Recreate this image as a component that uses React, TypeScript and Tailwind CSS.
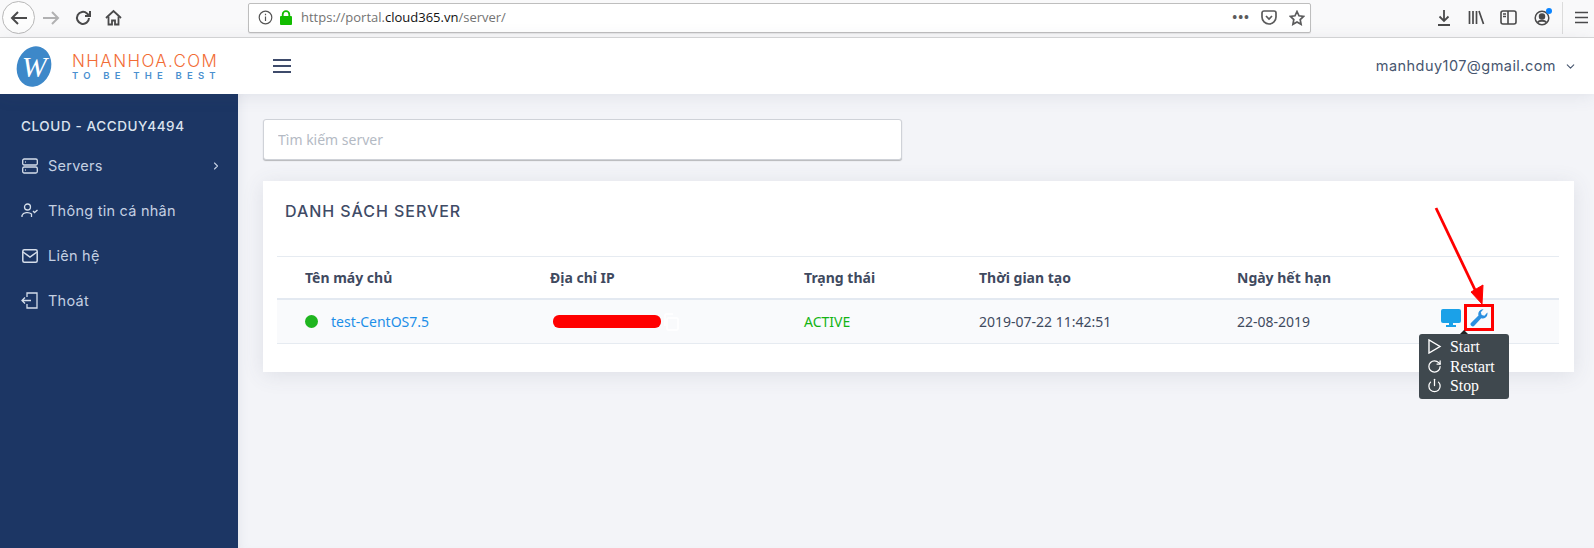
import { ChevronDown, ChevronRight, Power, RotateCw } from 'lucide-react';

const columns = [
  { label: 'Tên máy chủ', width: 'w-[245px]' },
  { label: 'Địa chỉ IP', width: 'w-[254px]' },
  { label: 'Trạng thái', width: 'w-[175px]' },
  { label: 'Thời gian tạo', width: 'w-[258px]' },
  { label: 'Ngày hết hạn', width: 'w-[200px]' },
];

function BrowserBar() {
  return (
    <div className="flex h-[38px] items-center border-b border-[#d8d8d8] bg-[#f9f9fa] pb-[2px] text-[#4c4c4d]">
      <div className="ml-[2px] flex h-[33px] w-[33px] items-center justify-center rounded-full border border-[#b8b8b8] bg-[#fdfdfd]">
        <svg width="18" height="16" viewBox="0 0 18 16" fill="none" stroke="#4a4a4b" strokeWidth="2"><path d="M17 8H2M8 2 2 8l6 6" /></svg>
      </div>
      <svg className="ml-[7px]" width="18" height="16" viewBox="0 0 18 16" fill="none" stroke="#b1b1b2" strokeWidth="2"><path d="M1 8h15M10 2l6 6-6 6" /></svg>
      <svg className="ml-[14px]" width="18" height="18" viewBox="0 0 18 18" fill="none" stroke="#4a4a4b" strokeWidth="2"><path d="M15 9a6 6 0 1 1-2-4.600L16 7" /><path d="M16 2v5h-5" /></svg>
      <svg className="ml-[13px]" width="17" height="17" viewBox="0 0 17 17" fill="none" stroke="#4a4a4b" strokeWidth="1.800"><path d="M1 9 8.500 2 16 9" /><path d="M3.500 7.500V15.500H7V11.500h3v4h3.500V7.500" /></svg>
      <div className="ml-[126px] flex h-[30px] w-[1063px] items-center rounded-[2px] border border-[#bebebe] bg-white pl-[9px] pr-[5px] shadow-[0_1px_1px_rgba(0,0,0,0.08)]">
        <svg width="15" height="15" viewBox="0 0 15 15" fill="none" stroke="#555" strokeWidth="1.200"><circle cx="7.500" cy="7.500" r="6.300" /><path d="M7.500 6.500v4.500M7.500 3.800v1.400" /></svg>
        <svg className="ml-[6px]" width="14" height="15" viewBox="0 0 14 15"><rect x="1" y="6" width="12" height="9" rx="1" fill="#12bc00" /><path d="M3.700 6.500V4.500a3.300 3.300 0 0 1 6.600 0v2" fill="none" stroke="#12bc00" strokeWidth="1.800" /></svg>
        <span className="ml-[8px] font-['Open_Sans',sans-serif] text-[13px] text-[#737373]">
          https://portal.<span className="text-[#111]">cloud365.vn</span>/server/
        </span>
        <span className="ml-auto text-[13px] font-bold leading-none tracking-[1px] text-[#5b5b5c]">•••</span>
        <svg className="ml-[11px]" width="16" height="15" viewBox="0 0 16 15" fill="none" stroke="#5b5b5c" strokeWidth="1.700"><path d="M1 3a2 2 0 0 1 2-2h10a2 2 0 0 1 2 2v4a7 7 0 0 1-14 0z" /><path d="m5 6 3 3 3-3" /></svg>
        <svg className="ml-[12px]" width="16" height="16" viewBox="0 0 16 16" fill="none" stroke="#5b5b5c" strokeWidth="1.700"><path d="m8 1.500 2 4.300 4.600.6-3.400 3.200.9 4.700L8 12l-4.100 2.300.9-4.700L1.400 6.400l4.600-.6z" /></svg>
      </div>
      <svg className="ml-[126px]" width="14" height="16" viewBox="0 0 14 16" fill="none" stroke="#4a4a4b" strokeWidth="1.800"><path d="M7 0v11M2.500 6.500 7 11l4.500-4.500M1 15h12" /></svg>
      <svg className="ml-[17px]" width="17" height="15" viewBox="0 0 17 15" fill="none" stroke="#4a4a4b" strokeWidth="1.700"><path d="M1.500 1v13M5 1v13M8.500 1v13M11 1l4.500 13" /></svg>
      <svg className="ml-[15px]" width="17" height="15" viewBox="0 0 17 15" fill="none" stroke="#4a4a4b" strokeWidth="1.600"><rect x="1" y="1" width="15" height="13" rx="2" /><path d="M8 1v13" /><path d="M3 4h3M3 6.500h3" /></svg>
      <div className="relative ml-[17px] h-[16px] w-[16px]">
        <svg width="16" height="16" viewBox="0 0 16 16" fill="none" stroke="#4a4a4b" strokeWidth="1.500"><circle cx="8" cy="8" r="6.800" /><circle cx="8" cy="6.500" r="2.500" fill="#4a4a4b" /><path d="M3.500 12.500c2-2.500 7-2.500 9 0" strokeWidth="2" /></svg>
        <span className="absolute right-[-2px] top-[-2px] h-[6px] w-[6px] rounded-full bg-[#0a84ff]" />
      </div>
      <div className="ml-[12px] h-[32px] w-px bg-[#dcdcdc]" />
      <svg className="ml-[12px]" width="13" height="13" viewBox="0 0 13 13" stroke="#4a4a4b" strokeWidth="1.700"><path d="M0 1.500h13M0 6.500h13M0 11.500h13" /></svg>
    </div>
  );
}

function AppHeader() {
  return (
    <header className="relative z-10 flex h-[56px] items-center bg-white shadow-[0_2px_18px_rgba(70,80,110,0.1)]">
      <div className="ml-[17px] flex h-[41px] w-[34px] rotate-[18deg] items-center justify-center rounded-[50%] bg-[#3d88c9]">
        <span className="-rotate-[18deg] font-['Liberation_Serif',serif] text-[30px] italic leading-none text-white">W</span>
      </div>
      <div className="ml-[21px] w-[147px]">
        <div className="whitespace-nowrap font-['Inter',sans-serif] text-[17px] font-light leading-[18px] tracking-[1.400px] text-[#f26c35]">NHANHOA.COM</div>
        <div className="mt-[1px] whitespace-nowrap font-['Inter',sans-serif] text-[9.500px] font-semibold leading-[10px] tracking-[5.200px] text-[#4a90cf]">TO BE THE BEST</div>
      </div>
      <div className="ml-[54px] flex w-[18px] flex-col gap-[4px]">
        <span className="h-[2px] bg-[#3e4b6b]" />
        <span className="h-[2px] bg-[#3e4b6b]" />
        <span className="h-[2px] bg-[#3e4b6b]" />
      </div>
      <div className="ml-auto mr-[17px] flex items-center gap-[8px] font-['Inter',sans-serif] text-[14.500px] tracking-[0.45px] text-[#47566f]">
        manhduy107@gmail.com
        <ChevronDown size={13} strokeWidth={2} />
      </div>
    </header>
  );
}

function Sidebar() {
  return (
    <aside className="w-[238px] shrink-0 bg-[#1c3664] pl-[21px] pr-[16px] pt-[22px] font-['Inter',sans-serif] text-[#c4d0e2]">
      <div className="text-[13.500px] font-medium leading-[20px] tracking-[0.6px] text-[#dbe3ee]">CLOUD - ACCDUY4494</div>
      <nav className="mt-[7px] flex flex-col text-[14.500px] tracking-[0.25px]">
        <a className="flex h-[45px] items-center gap-[10px]">
          <span className="flex w-[17px] justify-center">
            <svg width="16" height="16" viewBox="0 0 16 16" fill="none" stroke="#d5deea" strokeWidth="1.300"><rect x="0.700" y="1" width="14.600" height="6" rx="1.500" /><rect x="0.700" y="9" width="14.600" height="6" rx="1.500" /><path d="M3 4h.8M3 12h.8" /></svg>
          </span>
          Servers
          <ChevronRight className="ml-auto" size={12} strokeWidth={2.200} />
        </a>
        <a className="flex h-[45px] items-center gap-[10px]">
          <span className="flex w-[17px] justify-center">
            <svg width="17" height="15" viewBox="0 0 17 15" fill="none" stroke="#d5deea" strokeWidth="1.300"><circle cx="6.500" cy="4" r="3" /><path d="M1 14v-1.500a5.500 4 0 0 1 9.500-1.500V14" /><path d="m12 8 1.500 1.500L16.500 7" /></svg>
          </span>
          Thông tin cá nhân
        </a>
        <a className="flex h-[45px] items-center gap-[10px]">
          <span className="flex w-[17px] justify-center">
            <svg width="16" height="14" viewBox="0 0 16 14" fill="none" stroke="#d5deea" strokeWidth="1.500"><rect x="0.800" y="0.800" width="14.400" height="12.400" rx="1.500" /><path d="m1 3 7 5 7-5" /></svg>
          </span>
          Liên hệ
        </a>
        <a className="flex h-[45px] items-center gap-[10px]">
          <span className="flex w-[17px] justify-center">
            <svg width="17" height="17" viewBox="0 0 17 17" fill="none" stroke="#d5deea" strokeWidth="1.300"><path d="M6 5V1h10v15H6v-4" /><path d="M10 8.500H1M4 5.500l-3 3 3 3" /></svg>
          </span>
          Thoát
        </a>
      </nav>
    </aside>
  );
}

function ActionMenu() {
  return (
    <div className="absolute left-[-22px] top-[30px] z-20 h-[65px] w-[90px] rounded-[3px] bg-[#3f484e] py-[3px] pl-[8px] font-['Liberation_Serif',serif] text-[15.800px] leading-[19.500px] text-white">
      <span className="absolute left-[41px] top-[-4px] h-0 w-0 border-x-[4px] border-b-[4px] border-x-transparent border-b-[#222]" />
      <div className="flex items-center gap-[8px]">
        <svg width="15" height="15" viewBox="0 0 15 15" fill="none" stroke="#fff" strokeWidth="1.400"><path d="M2 1v13l11-6.500z" /></svg>
        Start
      </div>
      <div className="flex items-center gap-[8px]"><RotateCw size={15} strokeWidth={2} />Restart</div>
      <div className="flex items-center gap-[8px]"><Power size={15} strokeWidth={2} />Stop</div>
    </div>
  );
}

function ServerTable() {
  return (
    <div className="ml-[14px] mr-[15px] mt-[34px] font-['Noto_Sans',sans-serif]">
      <div className="flex h-[43px] items-center border-y border-t-[#e6ebf1] border-b-[#e3e9f1] pl-[28px] text-[14px] font-bold text-[#3f4a5f]">
        {columns.map((col) => (
          <div key={col.label} className={col.width}>{col.label}</div>
        ))}
      </div>
      <div className="flex h-[45px] items-center border-y border-t-[#e3e9f1] border-b-[#e6ebf1] bg-[#f9fafc] pl-[28px] text-[14px] text-[#3f4a5f]">
        <div className="flex w-[245px] items-center gap-[13px]">
          <span className="h-[13px] w-[13px] rounded-full bg-[#1fb51f]" />
          <span className="text-[#1d8fe8]">test-CentOS7.5</span>
        </div>
        <div className="flex w-[254px] items-center pl-[3px]">
          <div className="h-[13px] w-[108px] rounded-[6px] bg-[#ff0000]" />
          <svg className="ml-[2px]" width="16" height="18" viewBox="0 0 16 18" fill="none" stroke="#ffffff" strokeWidth="1.500"><rect x="4" y="5" width="11" height="12" rx="1" /><path d="M2 13V2a1 1 0 0 1 1-1h7" /></svg>
        </div>
        <div className="w-[175px] text-[#14b414]">ACTIVE</div>
        <div className="w-[258px]">2019-07-22 11:42:51</div>
        <div className="w-[200px]">22-08-2019</div>
        <div className="relative ml-[4px] mt-[-8px] flex items-center gap-[3px]">
          <svg width="20" height="18" viewBox="0 0 20 18" fill="#1ba1e8"><rect width="20" height="14" rx="2" /><path d="M8 14h4v2h3v2H5v-2h3z" /></svg>
          <div className="flex h-[27px] w-[30px] items-center justify-center border-[3px] border-[#ff0000]">
            <svg width="18" height="18" viewBox="0 0 18 18" fill="#2a8fe0"><path d="M17.500 4.500a4.800 4.800 0 0 1-6.300 4.700L4.500 16.600a2.200 2.200 0 1 1-3.100-3.100L8.500 6.500A4.800 4.800 0 0 1 13.500 0.300L10.800 3.300l.9 2.700 2.700.8L17.300 3.500z" /></svg>
          </div>
          <ActionMenu />
        </div>
      </div>
    </div>
  );
}

export default function App() {
  return (
    <div className="relative flex h-[548px] w-[1594px] flex-col overflow-hidden bg-[#f3f4f8]">
      <BrowserBar />
      <AppHeader />
      <div className="flex flex-1">
        <Sidebar />
        <main className="flex-1 pl-[25px] pr-[20px] pt-[25px] shadow-[inset_8px_0_12px_-8px_rgba(70,80,110,0.1)]">
          <input
            readOnly
            placeholder="Tìm kiếm server"
            className="block h-[41px] w-[639px] rounded-[3px] border border-[#cfd2d8] bg-white px-[14px] font-['Noto_Sans',sans-serif] text-[14px] shadow-[0_1px_1px_rgba(0,0,0,0.25)] outline-none placeholder:text-[#b4bac4]"
          />
          <section className="mt-[21px] h-[191px] bg-white pt-[19px] shadow-[0_3px_20px_rgba(70,80,110,0.12)]">
            <h2 className="pl-[22px] font-['Inter',sans-serif] text-[16px] font-medium leading-[22px] tracking-[0.95px] text-[#3f4b66]">DANH SÁCH SERVER</h2>
            <ServerTable />
          </section>
        </main>
      </div>
      {/* annotation arrow drawn on top of the screenshot */}
      <svg className="pointer-events-none absolute left-[1425px] top-[200px] z-30" width="70" height="110" viewBox="0 0 70 110">
        <path d="M11 8 52 94" stroke="#ff0000" strokeWidth="2.800" />
        <path d="M46 92 57 104 58 85z" fill="#ff0000" stroke="#ff0000" />
      </svg>
    </div>
  );
}
